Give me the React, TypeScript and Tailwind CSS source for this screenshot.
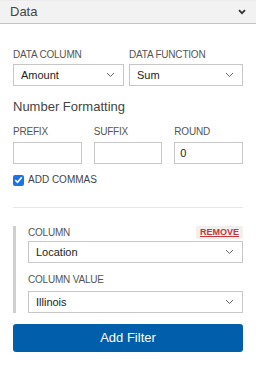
import React from "react";

const Chevron = () => (
  <svg width="9" height="6" viewBox="0 0 9 6" className="shrink-0">
    <path d="M1 1 L4.5 4.5 L8 1" fill="none" stroke="#666" strokeWidth="1" />
  </svg>
);

const Select = ({ value }: { value: string }) => (
  <div className="flex h-[22px] items-center justify-between border border-[#c7c7c7] bg-white pl-[7px] pr-[8px] text-[11px] text-[#222]">
    <span>{value}</span>
    <Chevron />
  </div>
);

const Label = ({ children }: { children: React.ReactNode }) => (
  <div className="text-[10px] leading-[12px] uppercase tracking-[-0.2px] text-[#555]">{children}</div>
);

export default function App() {
  return (
    <div className="w-[256px] h-[374px] bg-white" style={{ fontFamily: '"Liberation Sans", Arial, sans-serif' }}>
      <div className="flex h-[24px] items-center justify-between border-t border-b border-t-[#ececec] border-b-[#c4c4c4] bg-[#f2f2f2] pl-[10px] pr-[10px]">
        <span className="text-[13px] text-[#444]">Data</span>
        <svg width="8" height="6" viewBox="0 0 8 6">
          <path d="M1 1.2 L4 4.2 L7 1.2" fill="none" stroke="#333" strokeWidth="1.8" />
        </svg>
      </div>
      <div className="px-[13px] pt-[25px]">
        <div className="flex gap-[5px]">
          <div className="w-[111px]">
            <Label>Data Column</Label>
            <div className="mt-[3px]"><Select value="Amount" /></div>
          </div>
          <div className="flex-1">
            <Label>Data Function</Label>
            <div className="mt-[3px]"><Select value="Sum" /></div>
          </div>
        </div>
        <div className="mt-[13px] text-[13px] leading-[16px] text-[#444]">Number Formatting</div>
        <div className="mt-[11px] grid grid-cols-3 gap-[12px]">
          {["Prefix", "Suffix", "Round"].map((l) => (
            <div key={l}>
              <Label>{l}</Label>
              <div className="mt-[4px] flex h-[22px] items-center border border-[#c7c7c7] bg-white pl-[5px] text-[11px] text-[#222]">
                {l === "Round" ? "0" : ""}
              </div>
            </div>
          ))}
        </div>
        <div className="mt-[10px] flex items-center gap-[4px]">
          <div className="flex h-[11px] w-[11px] items-center justify-center rounded-[2px] bg-[#1a73e8]">
            <svg width="9" height="8" viewBox="0 0 9 8">
              <path d="M1.2 4 L3.5 6.3 L7.8 1.3" fill="none" stroke="white" strokeWidth="1.6" />
            </svg>
          </div>
          <span className="text-[10px] leading-[12px] text-[#444]">ADD COMMAS</span>
        </div>
        <div className="mt-[21px] h-px bg-[#e6e6e6]" />
        <div className="mt-[18px] flex">
          <div className="w-[3px] bg-[#cfcfcf]" />
          <div className="flex-1 pl-[12px]">
            <div className="flex items-center justify-between">
              <Label>Column</Label>
              <span className="rounded-[2px] bg-[#f3efef] px-[4px] py-[1px] text-[9px] font-bold leading-[11px] text-[#c4363a] underline">REMOVE</span>
            </div>
            <div className="mt-[2px]"><Select value="Location" /></div>
            <div className="mt-[11px]"><Label>Column Value</Label></div>
            <div className="mt-[5px]"><Select value="Illinois" /></div>
          </div>
        </div>
        <button className="mt-[11px] flex h-[28px] w-full items-center justify-center rounded-[3px] bg-[#005eaa] text-[13px] text-white">
          Add Filter
        </button>
      </div>
    </div>
  );
}
